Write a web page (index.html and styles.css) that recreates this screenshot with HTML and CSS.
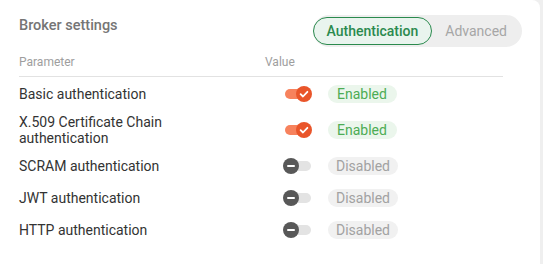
FILE: index.html
```html
<!DOCTYPE html>
<html>
<head>
<meta charset="utf-8">
<link rel="stylesheet" href="styles.css">
</head>
<body>
<div class="card">
  <div class="header">
    <div class="title">Broker settings</div>
    <div class="segmented">
      <span class="seg seg-active">Authentication</span>
      <span class="seg">Advanced</span>
    </div>
  </div>
  <div class="table">
    <div class="th">Parameter</div>
    <div class="th">Value</div>

    <div class="td name">Basic authentication</div>
    <div class="td value">
      <span class="switch on"><span class="track"></span><span class="thumb"><svg viewBox="0 0 16 16" width="16" height="16"><path d="M4.6 8.2 L7 10.5 L11.4 5.8" fill="none" stroke="#fff" stroke-width="1.8" stroke-linecap="round" stroke-linejoin="round"/></svg></span></span>
      <span class="chip chip-on">Enabled</span>
    </div>

    <div class="td name">X.509 Certificate Chain<br>authentication</div>
    <div class="td value">
      <span class="switch on"><span class="track"></span><span class="thumb"><svg viewBox="0 0 16 16" width="16" height="16"><path d="M4.6 8.2 L7 10.5 L11.4 5.8" fill="none" stroke="#fff" stroke-width="1.8" stroke-linecap="round" stroke-linejoin="round"/></svg></span></span>
      <span class="chip chip-on">Enabled</span>
    </div>

    <div class="td name">SCRAM authentication</div>
    <div class="td value">
      <span class="switch off"><span class="track"></span><span class="thumb"><span class="minus"></span></span></span>
      <span class="chip chip-off">Disabled</span>
    </div>

    <div class="td name">JWT authentication</div>
    <div class="td value">
      <span class="switch off"><span class="track"></span><span class="thumb"><span class="minus"></span></span></span>
      <span class="chip chip-off">Disabled</span>
    </div>

    <div class="td name">HTTP authentication</div>
    <div class="td value">
      <span class="switch off"><span class="track"></span><span class="thumb"><span class="minus"></span></span></span>
      <span class="chip chip-off">Disabled</span>
    </div>
  </div>
</div>
</body>
</html>
```
FILE: styles.css
```css
html, body {
  margin: 0;
  padding: 0;
}
body {
  background: #efefef;
  font-family: Roboto, "Liberation Sans", sans-serif;
  width: 543px;
  height: 264px;
  overflow: hidden;
}
.card {
  background: #ffffff;
  width: 540px;
  height: 264px;
  box-sizing: border-box;
  border-top-right-radius: 8px;
  padding: 15px 18px 0 19px;
}
.header {
  display: flex;
  justify-content: space-between;
  align-items: flex-start;
  height: 32px;
}
.title {
  font-size: 14.5px;
  line-height: 20px;
  font-weight: 500;
  color: #757575;
  margin-top: 1px;
}
.segmented {
  display: flex;
  align-items: center;
  background: #eeeeee;
  border-radius: 16px;
  height: 32px;
  box-sizing: border-box;
  padding: 0 15px 0 0;
  gap: 13px;
}
.seg {
  font-size: 14px;
  line-height: 16px;
  color: #a6a6a6;
}
.seg-active {
  color: #2b8a4e;
  font-weight: 500;
  border: 1px solid #2b8a4e;
  background: #e9f4ee;
  border-radius: 14px;
  padding: 5px 13px;
}
.table {
  display: grid;
  grid-template-columns: 246px 238px;
}
.th {
  font-size: 12px;
  line-height: 16px;
  color: #9e9e9e;
  padding: 7px 0 6px;
  border-bottom: 1px solid #e2e2e2;
}
.td {
  box-sizing: border-box;
  min-height: 32px;
  padding: 5px 0 3px;
  font-size: 14px;
  line-height: 16px;
  color: #333333;
  display: flex;
  align-items: center;
}
.value {
  padding-left: 18px;
}
.switch {
  position: relative;
  display: inline-block;
  width: 29px;
  height: 16px;
  flex: none;
}
.track {
  position: absolute;
  left: 2px;
  right: 1px;
  top: 3px;
  height: 10px;
  border-radius: 5px;
}
.thumb {
  position: absolute;
  top: 0;
  width: 16px;
  height: 16px;
  border-radius: 50%;
  display: flex;
  align-items: center;
  justify-content: center;
}
.on .track { background: #f7825d; }
.on .thumb { right: 0; background: #e9552a; }
.off .track { background: #e3e3e3; }
.off .thumb { left: 0; background: #585858; }
.minus {
  width: 8px;
  height: 2px;
  background: #ffffff;
  border-radius: 1px;
}
.chip {
  margin-left: 16px;
  height: 18px;
  line-height: 18px;
  font-size: 14px;
  border-radius: 9px;
  padding: 0 9px;
  min-width: 51px;
}
.chip-on {
  background: #ebf6ec;
  color: #4dac54;
}
.chip-off {
  background: #f1f1f1;
  color: #a2a2a2;
  padding: 0 8px;
}
```
